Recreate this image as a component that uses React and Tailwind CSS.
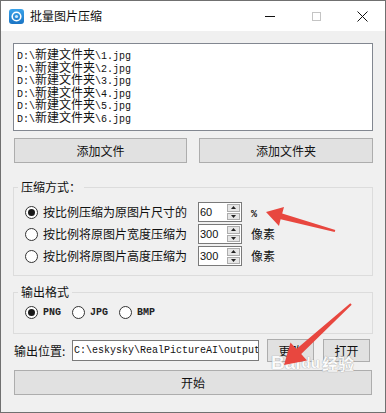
import React from "react";

const CJK = '"Noto Sans CJK SC", sans-serif';
const MONO = '"Liberation Mono", monospace';

function Mixed({ text, latinClass = "text-[10px]", cjkClass = "text-[12px]" }) {
  const parts = text.split(/([\u3000-\u9fff\uff00-\uffef]+)/).filter(Boolean);
  return (
    <>
      {parts.map((p, i) =>
        /[\u3000-\u9fff\uff00-\uffef]/.test(p) ? (
          <span key={i} className={`font-['Noto_Sans_CJK_SC',sans-serif] ${cjkClass}`}>{p}</span>
        ) : (
          <span key={i} className={`font-['Liberation_Mono',monospace] ${latinClass}`}>{p}</span>
        )
      )}
    </>
  );
}

function Radio({ checked }) {
  return (
    <span className="w-[13px] h-[13px] rounded-full border border-[#333333] bg-white flex items-center justify-center shrink-0">
      {checked && <span className="w-[7px] h-[7px] rounded-full bg-[#1a1a1a]" />}
    </span>
  );
}

function Spin({ value }) {
  return (
    <div className="w-[44px] h-[20px] border border-[#7a7a7a] bg-white flex items-center">
      <span className="flex-1 pl-[1px] text-[11px] font-['Liberation_Sans',sans-serif] text-[#111] leading-none">{value}</span>
      <div className="w-[13px] h-[16px] mr-[1px] flex flex-col gap-[1px]">
        <div className="flex-1 bg-[#e6e6e6] border border-[#adadad] flex items-center justify-center">
          <svg width="5" height="3" viewBox="0 0 5 3"><path d="M2.5 0L5 3H0z" fill="#222" /></svg>
        </div>
        <div className="flex-1 bg-[#e6e6e6] border border-[#adadad] flex items-center justify-center">
          <svg width="5" height="3" viewBox="0 0 5 3"><path d="M0 0H5L2.5 3z" fill="#222" /></svg>
        </div>
      </div>
    </div>
  );
}

function Btn({ children, className = "" }) {
  return (
    <div className={`h-[25px] bg-[#e1e1e1] border border-[#adadad] flex items-center justify-center text-[12px] text-[#111] font-['Noto_Sans_CJK_SC',sans-serif] ${className}`}>
      {children}
    </div>
  );
}

export default function App() {
  const files = [1, 2, 3, 4, 5, 6].map((n) => `D:\\新建文件夹\\${n}.jpg`);
  const modes = [
    { label: "按比例压缩为原图片尺寸的", value: "60", unit: "%", checked: true },
    { label: "按比例将原图片宽度压缩为", value: "300", unit: "像素" },
    { label: "按比例将原图片高度压缩为", value: "300", unit: "像素" },
  ];
  return (
    <div className="relative w-[386px] h-[413px] border border-[#707070] bg-[#f0f0f0] flex flex-col overflow-hidden font-['Noto_Sans_CJK_SC',sans-serif] text-[#111]">
      {/* Title bar */}
      <div className="h-[30px] bg-white flex items-center shrink-0">
        <div className="ml-[8px] w-[15px] h-[15px]">
          <svg width="15" height="15" viewBox="0 0 15 15">
            <defs>
              <linearGradient id="ig" x1="0" y1="0" x2="0" y2="1">
                <stop offset="0" stopColor="#3aa3ea" />
                <stop offset="1" stopColor="#1a74c4" />
              </linearGradient>
            </defs>
            <rect x="0" y="0" width="15" height="15" rx="3" fill="url(#ig)" />
            <circle cx="7.5" cy="7.5" r="4.3" fill="none" stroke="#fff" strokeWidth="1.6" />
            <circle cx="7.5" cy="7.5" r="1.6" fill="#cfe8fa" />
          </svg>
        </div>
        <span className="ml-[6px] text-[12px] text-[#111]">批量图片压缩</span>
        <div className="flex-1" />
        <div className="w-[46px] h-full flex items-center justify-center">
          <div className="w-[10px] h-[1px] bg-[#111]" />
        </div>
        <div className="w-[46px] h-full flex items-center justify-center">
          <div className="w-[9px] h-[9px] border border-[#c4c4c4]" />
        </div>
        <div className="w-[46px] h-full flex items-center justify-center">
          <svg width="11" height="11" viewBox="0 0 11 11">
            <path d="M0.5 0.5L10.5 10.5M10.5 0.5L0.5 10.5" stroke="#111" strokeWidth="1" />
          </svg>
        </div>
      </div>

      {/* Body */}
      <div className="flex flex-col px-[12px]">
        {/* List box */}
        <div className="mt-[12px] h-[88px] border border-[#828790] bg-white pl-[3px] pt-[2px]">
          {files.map((f) => (
            <div key={f} className="h-[12.5px] leading-[12.5px] whitespace-nowrap text-[#111]">
              <Mixed text={f} />
            </div>
          ))}
        </div>

        {/* Add buttons */}
        <div className="mt-[7px] flex">
          <Btn className="ml-[1px] w-[173px]">添加文件</Btn>
          <Btn className="ml-[12px] w-[174px]">添加文件夹</Btn>
        </div>

        {/* Compression mode */}
        <fieldset className="mt-[16px] border border-[#dcdcdc] px-[4px] pb-[8px]">
          <legend className="px-[3px] text-[12px] leading-[16px]">压缩方式：</legend>
          <div className="pt-[6px] flex flex-col">
            {modes.map((m) => (
              <div key={m.label} className="h-[22px] flex items-center">
                <span className="ml-[7px]"><Radio checked={m.checked} /></span>
                <span className="ml-[5px] w-[155px] text-[12px] whitespace-nowrap">{m.label}</span>
                <Spin value={m.value} />
                <span className="ml-[9px] text-[12px]">
                  {m.unit === "%" ? (
                    <span className="font-['Liberation_Mono',monospace] text-[10px] font-bold">%</span>
                  ) : (
                    m.unit
                  )}
                </span>
              </div>
            ))}
          </div>
        </fieldset>

        {/* Output format */}
        <fieldset className="mt-[8px] border border-[#dcdcdc] px-[4px] pb-[10px]">
          <legend className="px-[3px] text-[12px] leading-[16px]">输出格式</legend>
          <div className="pt-[1px] h-[23px] flex items-center">
            {[
              ["PNG", true],
              ["JPG", false],
              ["BMP", false],
            ].map(([t, c], i) => (
              <div key={t} className={`flex items-center ${i === 0 ? "ml-[7px]" : "ml-[11px]"}`}>
                <Radio checked={c} />
                <span className="ml-[5px] font-['Liberation_Mono',monospace] text-[10px] font-bold text-[#222]">{t}</span>
              </div>
            ))}
          </div>
        </fieldset>

        {/* Output location */}
        <div className="mt-[5px] h-[23px] flex items-center">
          <span className="ml-[1px] w-[58px] text-[12px] whitespace-nowrap">输出位置:</span>
          <div className="w-[187px] h-[21px] border border-[#7a7a7a] bg-white overflow-hidden flex items-center pl-[1px]">
            <span className="font-['Liberation_Mono',monospace] text-[10px] whitespace-nowrap text-[#111]">C:\eskysky\RealPictureAI\output</span>
          </div>
          <div className="ml-[8px] w-[47px] h-[23px] bg-[#e1e1e1] border border-[#adadad] flex items-center justify-center text-[12px]">更改</div>
          <div className="ml-[9px] w-[47px] h-[23px] bg-[#e1e1e1] border border-[#adadad] flex items-center justify-center text-[12px]">打开</div>
        </div>

        {/* Start */}
        <Btn className="mt-[8px] ml-[1px] w-[358px]">开始</Btn>
      </div>

      {/* Baidu watermark */}
      <div className="absolute left-[270px] top-[352px] flex items-center text-white opacity-80 pointer-events-none [text-shadow:0_0_1px_#9a9a9a,0_0_1px_#9a9a9a]">
        <span className="font-['Liberation_Sans',sans-serif] font-bold text-[19px] leading-none">Bai</span>
        <span className="ml-[1px] font-['Liberation_Sans',sans-serif] font-bold text-[15px] leading-none">du</span>
        <span className="ml-[2px] text-[16px] font-bold leading-none">经验</span>
      </div>

      {/* Annotation arrows */}
      <svg className="absolute left-0 top-0 pointer-events-none" width="386" height="413" viewBox="0 0 386 413">
        <polygon
          points="265,211 283,206 281.2,212.4 334.3,229 333.7,231 279.6,218.2 278,225"
          fill="#e8473f"
        />
        <polygon
          points="283,364 289.5,341.5 295.4,347.9 349.3,302.3 350.7,303.7 300.2,353.1 306,359.5"
          fill="#e8473f"
        />
      </svg>
    </div>
  );
}
